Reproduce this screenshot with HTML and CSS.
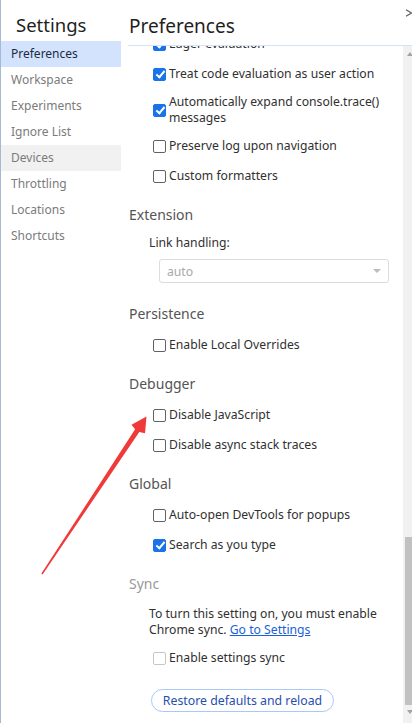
FILE: index.html
```html
<!DOCTYPE html>
<html lang="en">
<head>
<meta charset="utf-8">
<title>Settings</title>
<link rel="stylesheet" href="styles.css">
</head>
<body>
<div class="app">
  <nav class="sidebar">
    <h1 class="side-title">Settings</h1>
    <ul class="side-list">
      <li class="side-item active">Preferences</li>
      <li class="side-item">Workspace</li>
      <li class="side-item">Experiments</li>
      <li class="side-item">Ignore List</li>
      <li class="side-item hover">Devices</li>
      <li class="side-item">Throttling</li>
      <li class="side-item">Locations</li>
      <li class="side-item">Shortcuts</li>
    </ul>
  </nav>
  <main class="main">
    <header class="main-header">
      <h2 class="main-title">Preferences</h2>
      <svg class="close" width="7" height="8" viewBox="0 0 7 8" aria-hidden="true"><path d="M1 0.8 L6.5 4 L1 7.2" fill="none" stroke="#5f6368" stroke-width="1.3"/></svg>
    </header>
    <div class="scroll-area">
      <div class="content">
        <div class="content-inner">
          <section class="section">
            <label class="row"><span class="cb checked"></span><span class="text">Eager evaluation</span></label>
            <label class="row"><span class="cb checked"></span><span class="text">Treat code evaluation as user action</span></label>
            <label class="row"><span class="cb checked"></span><span class="text">Automatically expand console.trace()<br>messages</span></label>
            <label class="row"><span class="cb"></span><span class="text">Preserve log upon navigation</span></label>
            <label class="row"><span class="cb"></span><span class="text">Custom formatters</span></label>
          </section>
          <section class="section">
            <h3 class="heading">Extension</h3>
            <div class="field-label">Link handling:</div>
            <div class="select"><span class="select-value">auto</span><span class="select-arrow"></span></div>
          </section>
          <section class="section">
            <h3 class="heading">Persistence</h3>
            <label class="row"><span class="cb"></span><span class="text">Enable Local Overrides</span></label>
          </section>
          <section class="section">
            <h3 class="heading">Debugger</h3>
            <label class="row"><span class="cb"></span><span class="text">Disable JavaScript</span></label>
            <label class="row"><span class="cb"></span><span class="text">Disable async stack traces</span></label>
          </section>
          <section class="section">
            <h3 class="heading">Global</h3>
            <label class="row"><span class="cb"></span><span class="text">Auto-open DevTools for popups</span></label>
            <label class="row"><span class="cb checked"></span><span class="text">Search as you type</span></label>
          </section>
          <section class="section">
            <h3 class="heading muted">Sync</h3>
            <p class="sync-note">To turn this setting on, you must enable<br>Chrome sync. <a class="link" href="#">Go to Settings</a></p>
            <label class="row row-sync"><span class="cb disabled"></span><span class="text">Enable settings sync</span></label>
            <button class="restore" type="button">Restore defaults and reload</button>
          </section>
        </div>
      </div>
      <div class="scrollbar">
        <span class="sb-up"></span>
        <span class="sb-thumb"></span>
        <span class="sb-down"></span>
      </div>
    </div>
  </main>
</div>
<svg class="annotation" width="412" height="723" viewBox="0 0 412 723" aria-hidden="true">
  <polygon points="146.5,416.5 131.5,424.8 135.1,429.3 41.4,573.6 42.6,574.4 139.3,432.1 145,433.3" fill="#f03a3a"/>
</svg>
</body>
</html>
```

FILE: styles.css
```css
* { box-sizing: border-box; }

html, body {
  margin: 0;
  padding: 0;
}

body {
  width: 412px;
  height: 723px;
  overflow: hidden;
  background: #ffffff;
  font-family: "Noto Sans", "Liberation Sans", sans-serif;
  color: #303030;
  position: relative;
}

.app {
  display: flex;
  height: 723px;
  border-left: 1px solid #a6b8d4;
}

/* Sidebar */
.sidebar {
  width: 120px;
  flex: none;
}

.side-title {
  margin: 0;
  height: 41px;
  padding: 12px 0 0 15px;
  font-size: 18.5px;
  line-height: 26px;
  font-weight: 400;
  color: #1f1f1f;
}

.side-list {
  list-style: none;
  margin: 0;
  padding: 0;
}

.side-item {
  height: 26px;
  line-height: 26px;
  padding-left: 10px;
  font-size: 12px;
  color: #7b7b7b;
}

.side-item.active {
  background: #d3e3fd;
  color: #1c2b44;
}

.side-item.hover {
  background: #f1f1f1;
}

/* Main */
.main {
  flex: 1;
  display: flex;
  flex-direction: column;
  min-width: 0;
}

.main-header {
  height: 46px;
  flex: none;
  margin-left: 7px;
  padding-left: 1px;
  border-bottom: 1px solid #d3e3fd;
  display: flex;
  justify-content: space-between;
}

.main-title {
  margin: 0;
  padding-top: 13px;
  font-size: 19px;
  line-height: 26px;
  font-weight: 400;
  color: #1f1f1f;
}

.close {
  margin-top: 9px;
  flex: none;
}

.scroll-area {
  flex: 1;
  display: flex;
  min-height: 0;
}

.content {
  flex: 1;
  overflow: hidden;
  padding-left: 8px;
}

.content-inner {
  margin-top: -17px;
}

.section {
  padding-bottom: 14px;
}

.heading {
  margin: 0 0 6px;
  height: 20px;
  font-size: 14px;
  line-height: 20px;
  font-weight: 400;
  color: #545454;
}

.heading.muted {
  color: #9a9a9a;
}

.row {
  display: flex;
  align-items: center;
  gap: 3px;
  min-height: 30px;
  padding: 5px 0 5px 24px;
  font-size: 12.2px;
  line-height: 16px;
  color: #303030;
}

.cb {
  flex: none;
  position: relative;
  width: 13px;
  height: 13px;
  border: 1px solid #5f6368;
  border-radius: 2px;
  background: #fff;
}

.cb.checked {
  background: #1a73e8;
  border-color: #1a73e8;
}

.cb.checked::after {
  content: "";
  position: absolute;
  left: 3.5px;
  top: 0.5px;
  width: 3px;
  height: 7px;
  border-right: 2px solid #fff;
  border-bottom: 2px solid #fff;
  transform: rotate(40deg);
}

.cb.disabled {
  border-color: #c6c6c6;
}

.field-label {
  padding: 4px 0 0 20px;
  font-size: 12.2px;
  line-height: 16px;
  color: #303030;
}

.select {
  margin: 8px 0 7px 30px;
  width: 230px;
  height: 24px;
  border: 1px solid #dcdcdc;
  border-radius: 3px;
  display: flex;
  align-items: center;
  justify-content: space-between;
  padding: 0 7px 0 7px;
}

.select-value {
  font-size: 12.2px;
  color: #a8a8a8;
}

.select-arrow {
  width: 0;
  height: 0;
  border-left: 4px solid transparent;
  border-right: 4px solid transparent;
  border-top: 4px solid #bdbdbd;
}

.sync-note {
  margin: 0;
  padding: 6px 0 0 20px;
  font-size: 12.2px;
  line-height: 16px;
  color: #303030;
}

.link {
  color: #1a5fd6;
  text-decoration: underline;
}

.row-sync {
  margin-top: 5px;
}

.restore {
  display: block;
  margin: 16px 0 0 22px;
  height: 23px;
  width: 183px;
  padding: 0;
  border: 1px solid #a8c7fa;
  border-radius: 12px;
  background: #fff;
  font-family: "Noto Sans", "Liberation Sans", sans-serif;
  font-size: 12.3px;
  color: #1f4fb0;
}

/* Scrollbar */
.scrollbar {
  width: 9px;
  flex: none;
  background: #f1f1f1;
  display: flex;
  flex-direction: column;
}

.sb-up {
  margin: 6px 0 0 4px;
  width: 0;
  height: 0;
  border-left: 3px solid transparent;
  border-right: 3px solid transparent;
  border-bottom: 4px solid #a3a3a3;
}

.sb-thumb {
  margin: auto 0 0 2px;
  width: 7px;
  height: 168px;
  background: #c1c1c1;
}

.sb-down {
  margin: 5px 0 9px 4px;
  width: 0;
  height: 0;
  border-left: 3px solid transparent;
  border-right: 3px solid transparent;
  border-top: 4px solid #a3a3a3;
}

/* Annotation overlay */
.annotation {
  position: absolute;
  left: 0;
  top: 0;
  pointer-events: none;
}
```
